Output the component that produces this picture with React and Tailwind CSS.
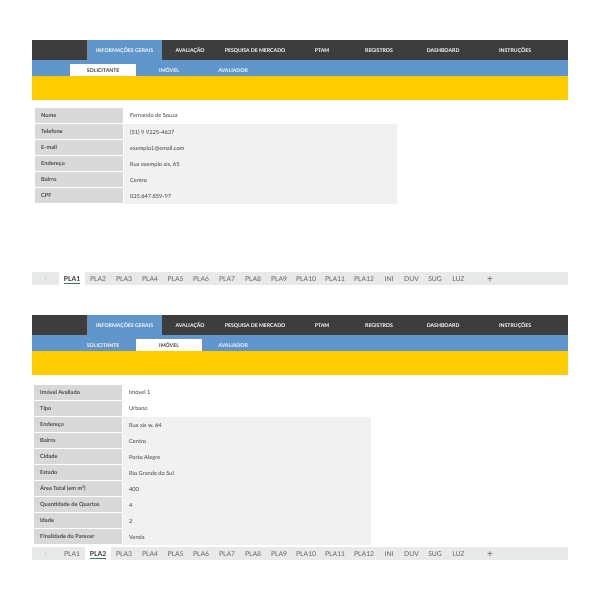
const NAV = ["AVALIAÇÃO", "PESQUISA DE MERCADO", "PTAM", "REGISTROS", "DASHBOARD", "INSTRUÇÕES"];
const SUB = ["SOLICITANTE", "IMÓVEL", "AVALIADOR"];
const TABS = ["PLA1", "PLA2", "PLA3", "PLA4", "PLA5", "PLA6", "PLA7", "PLA8", "PLA9", "PLA10", "PLA11", "PLA12", "INI", "DUV", "SUG", "LUZ"];

const SOLICITANTE = [
  ["Nome", "Fernando de Souza"],
  ["Telefone", "(51) 9 9225-4637"],
  ["E-mail", "exemplo1@email.com"],
  ["Endereço", "Rua exemplo xis, 65"],
  ["Bairro", "Centro"],
  ["CPF", "035.647.859-97"],
];

const IMOVEL = [
  ["Imóvel Avaliado", "Imóvel 1"],
  ["Tipo", "Urbano"],
  ["Endereço", "Rua xis w, 64"],
  ["Bairro", "Centro"],
  ["Cidade", "Porto Alegre"],
  ["Estado", "Rio Grande do Sul"],
  ["Área Total (em m²)", "400"],
  ["Quantidade de Quartos", "4"],
  ["Idade", "2"],
  ["Finalidade do Parecer", "Venda"],
];

const Header = ({ activeSub }) => (
  <div className="mx-8 w-[536px]">
    <div className="grid h-5 grid-cols-[55px_75px_56px_74px_60px_54px_74px_70px_18px] bg-[#3d3d3d] text-center text-[5.2px] font-bold text-[#f2f2f2]">
      <div />
      <div className="flex items-center justify-center bg-[#6096cc] pt-[3px]">INFORMAÇÕES GERAIS</div>
      {NAV.map((item) => (
        <div key={item} className="flex items-center justify-center pt-[3px]">{item}</div>
      ))}
    </div>
    <div className="grid h-4 grid-cols-[38px_66px_66px_62px] bg-[#6096cc] text-center text-[5.2px] font-bold text-[#f2f2f2]">
      <div />
      {SUB.map((item) => (
        <div
          key={item}
          className={item === activeSub ? "mt-1 flex items-center justify-center bg-white pt-[3px] text-[#444444]" : "mt-1 flex items-center justify-center pt-[3px]"}
        >
          {item}
        </div>
      ))}
    </div>
    <div className="h-6 bg-[#ffcc00]" />
  </div>
);

const DataTable = ({ rows, whiteRows, className }) => (
  <div className={className}>
    {rows.map(([label, value], i) => (
      <div key={label} className="flex h-4 text-[5.7px] text-[#444444]">
        <div className="mb-px flex w-[88px] items-center bg-[#d9d9d9] pl-[6px] pt-[2px] font-bold text-[#4a4a4a]">{label}</div>
        <div className={i < whiteRows ? "mb-px ml-px flex flex-1 items-center bg-white pl-[6px] pt-[2px]" : "ml-px flex flex-1 items-center bg-[#f1f1f1] pl-[6px] pt-[2px]"}>
          {value}
        </div>
      </div>
    ))}
  </div>
);

const TabBar = ({ active, className }) => (
  <div className={`mx-8 grid h-[13px] w-[536px] grid-cols-[27px_26px_26px_26px_26px_25px_26px_26px_26px_26px_28px_30px_28px_22px_23px_24px_23px_40px_1fr] bg-[#e8e9e9] text-center text-[6.8px] text-[#666666] ${className}`}>
    <div className="flex items-center justify-center text-[6px] text-[#aaaaaa]">›</div>
    {TABS.map((tab) => (
      <div key={tab} className={tab === active ? "flex items-center justify-center bg-white pt-[2px]" : "flex items-center justify-center pt-[2px]"}>
        <span className={tab === active ? "border-b border-[#3c7a5c] font-bold leading-[8px] text-[#333333]" : ""}>{tab}</span>
      </div>
    ))}
    <div className="flex items-center justify-center text-[10px] leading-none">+</div>
    <div />
  </div>
);

export default function App() {
  return (
    <div className="h-[600px] w-[600px] overflow-hidden bg-white pt-10 font-['Lato',sans-serif] [text-rendering:geometricPrecision] blur-[0.35px]">
      <Header activeSub="SOLICITANTE" />
      <DataTable rows={SOLICITANTE} whiteRows={1} className="ml-[35px] mt-2 w-[362px]" />
      <TabBar active="PLA1" className="mt-[68px]" />
      <div className="h-[30px]" />
      <Header activeSub="IMÓVEL" />
      <DataTable rows={IMOVEL} whiteRows={2} className="ml-[34px] mt-[10px] w-[337px]" />
      <TabBar active="PLA2" className="mt-[2px]" />
    </div>
  );
}
